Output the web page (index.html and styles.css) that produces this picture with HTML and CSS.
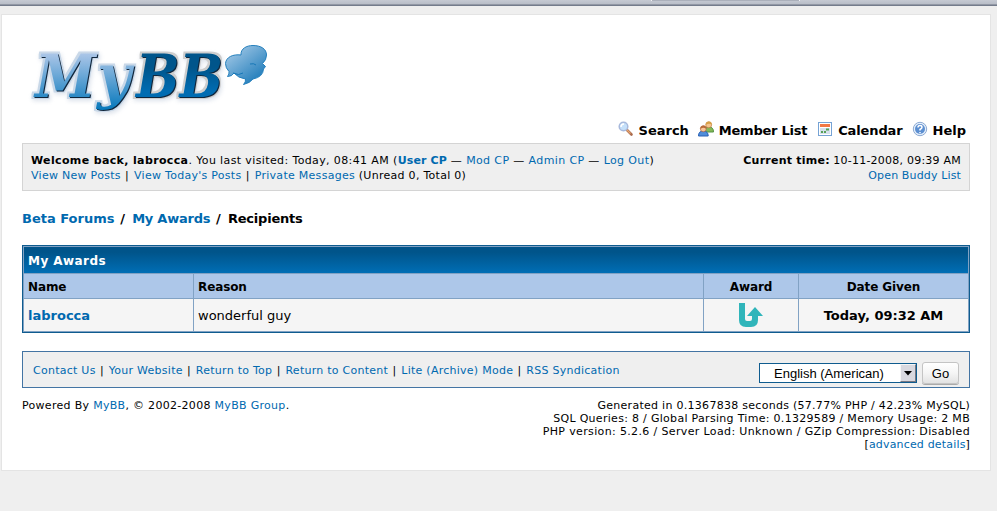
FILE: index.html
```html
<!DOCTYPE html>
<html lang="en">
<head>
<meta charset="utf-8">
<title>My Awards</title>
<link rel="stylesheet" href="styles.css">
</head>
<body>
<div class="chrome"><span></span></div>
<main class="container">
  <svg class="logo" width="260" height="90" viewBox="20 30 260 90">
    <defs>
      <linearGradient id="light" gradientUnits="userSpaceOnUse" x1="0" y1="52" x2="0" y2="109"><stop stop-color="#b0c8e9"/><stop offset="1" stop-color="#0879bc"/></linearGradient>
      <linearGradient id="dark" gradientUnits="userSpaceOnUse" x1="0" y1="54" x2="0" y2="98"><stop stop-color="#00558b"/><stop offset=".3" stop-color="#00558b"/><stop offset=".85" stop-color="#006cb2"/></linearGradient>
      <linearGradient id="bubble" x1="0" y1="0" x2=".8" y2="1"><stop stop-color="#b3d2ec"/><stop offset="1" stop-color="#1777b7"/></linearGradient>
      <filter id="halo-blue" x="-10%" y="-20%" width="120%" height="150%" color-interpolation-filters="sRGB">
        <feMorphology in="SourceAlpha" operator="dilate" radius="2" result="fat"/><feGaussianBlur in="fat" stdDeviation=".5" result="soft"/>
        <feFlood flood-color="#c9d8e8"/><feComposite in2="soft" operator="in" result="rim"/>
        <feOffset in="fat" dx="1" dy="2"/><feGaussianBlur stdDeviation="2" result="far"/><feFlood flood-color="#a9b8d0" flood-opacity=".4"/><feComposite in2="far" operator="in" result="glow"/>
        <feOffset in="SourceAlpha" dx="1" dy="1"/><feGaussianBlur stdDeviation=".7" result="near"/><feFlood flood-color="#10263c"/><feComposite in2="near" operator="in" result="edge"/>
        <feMerge><feMergeNode in="glow"/><feMergeNode in="rim"/><feMergeNode in="edge"/><feMergeNode in="SourceGraphic"/></feMerge>
      </filter>
      <filter id="halo-grey" x="-10%" y="-20%" width="120%" height="150%" color-interpolation-filters="sRGB">
        <feMorphology in="SourceAlpha" operator="dilate" radius="2" result="fat"/><feGaussianBlur in="fat" stdDeviation=".5" result="soft"/>
        <feFlood flood-color="#cecece"/><feComposite in2="soft" operator="in" result="rim"/>
        <feOffset in="fat" dx="1" dy="2"/><feGaussianBlur stdDeviation="2" result="far"/><feFlood flood-color="#a9b8d0" flood-opacity=".4"/><feComposite in2="far" operator="in" result="glow"/>
        <feOffset in="SourceAlpha" dx="1" dy="1"/><feGaussianBlur stdDeviation=".7" result="near"/><feFlood flood-color="#10263c"/><feComposite in2="near" operator="in" result="edge"/>
        <feMerge><feMergeNode in="glow"/><feMergeNode in="rim"/><feMergeNode in="edge"/><feMergeNode in="SourceGraphic"/></feMerge>
      </filter>
    </defs>
    <g filter="url(#halo-blue)" fill="url(#light)">
      <text x="35" y="97" textLength="61" lengthAdjust="spacingAndGlyphs">M</text><text x="97" y="97" textLength="34" lengthAdjust="spacingAndGlyphs">y</text>
    </g>
    <text x="136" y="97" textLength="87" lengthAdjust="spacingAndGlyphs" fill="url(#dark)" filter="url(#halo-grey)">BB</text>
    <path d="M241 54C241 49 246 45.500 253 45.500C261 45.500 266.500 49 266.500 55Q266.500 60 262.500 63.500L265.500 66.500L263.500 69Q263 77 253 79Q250 83 243.500 84.500Q246 82 245.500 79Q238 78 234 73Q232 76.500 227.500 76.500Q229.500 74 229 71.500Q225.500 68 225.500 63.500C226 57 233 54 241 55Z" fill="url(#bubble)" stroke="#2580bd"/>
    <path d="M250 64Q254 63 256 65M233 73Q239 76 243 73" fill="none" stroke="#1777b7"/>
  </svg>
  <nav class="menu">
    <a class="m1"><svg width="16" height="16" viewBox="0 0 16 16"><path d="M9 9l4.500 4.500" stroke="#a96a4d" stroke-width="2.600" stroke-linecap="round"/><path d="M8.500 8.500l4 4" stroke="#e7a56f" stroke-width="1.200"/><circle cx="5.500" cy="5.500" r="4.300" fill="#c5e0fa" stroke="#a8b9dc" stroke-width="1.500"/><path d="M3 6Q3 3 6 3" stroke="#fff" fill="none" stroke-width="1.500"/></svg><b>Search</b></a>
    <a class="m2"><svg width="16" height="16" viewBox="0 0 16 16"><path d="M6.500 11Q6.500 6 11 6Q15.500 6 15.500 11Z" fill="#84b957" stroke="#549344"/><circle cx="10.700" cy="3.800" r="3" fill="#f5c58f" stroke="#ba7434" stroke-width=".6"/><path d="M7.700 4Q8 .5 11 .5Q14 .7 13.700 4Q12 2 9.500 3Z" fill="#d7a045"/><path d="M.5 15Q.5 10 5.200 10Q10.200 10 10.200 15Z" fill="#508dda" stroke="#2861b5"/><circle cx="5.300" cy="7.800" r="3" fill="#f7c496" stroke="#9d583b" stroke-width=".6"/><path d="M2.300 8Q2.500 4.500 5.500 4.500Q8.500 4.700 8.300 8Q6 6.200 4 7Z" fill="#b96b38"/></svg><b>Member List</b></a>
    <a class="m3"><svg width="16" height="16" viewBox="0 0 16 16"><rect x="1.500" y="1.500" width="13" height="13" fill="#fff" stroke="#76a3d5"/><path d="M3 3h10v3H3z" fill="#f27844"/><path d="M3 7h10v6H3z" fill="#d5e0ec"/><path d="M4 10h2v2H4zm3 0h2v2H7zM9 7.500h3v2H9z" fill="#55a057"/></svg><b>Calendar</b></a>
    <a class="m4"><svg width="16" height="16" viewBox="0 0 16 16"><circle cx="8" cy="8" r="6.700" fill="#e7f0fb" stroke="#8ba9d3"/><circle cx="8" cy="8" r="5" fill="#5c8fd1"/><path d="M6 6.500Q6 4.500 8 4.500Q10 4.500 10 6.200Q10 7.300 8 8.500V9.500M8 11v1.200" fill="none" stroke="#fff" stroke-width="1.500"/></svg><b>Help</b></a>
  </nav>
  <section class="panel">
    <div><p><b class="w1">Welcome back, labrocca</b><span class="w2">. You last visited: Today, 08:41 AM (<a><b class="ucp">User CP</b></a> — <a>Mod CP</a> — <a>Admin CP</a> — <a>Log Out</a>)</span></p>
    <p class="w3"><a>View New Posts</a><i class="sep"> | </i><a>View Today's Posts</a><i class="sep"> | </i><a>Private Messages</a> (Unread 0, Total 0)</p></div>
    <div class="right"><p><b class="ct">Current time:</b> <span class="cd">10-11-2008, 09:39 AM</span></p><p><a class="obl">Open Buddy List</a></p></div>
  </section>
  <div class="crumbs"><a>Beta Forums</a><i> / </i><a class="tight">My Awards</a><i> / </i><span>Recipients</span></div>
  <section class="awards">
    <div class="title"><span>My Awards</span></div>
    <div class="c head"><span class="h1">Name</span></div><div class="c head"><span class="h2">Reason</span></div><div class="c head mid"><span class="h3">Award</span></div><div class="c head mid"><span class="h4">Date Given</span></div>
    <div class="c row"><a class="user">labrocca</a></div><div class="c row"><span class="reason">wonderful guy</span></div><div class="c row mid"><svg width="24" height="24" viewBox="0 0 24 24"><path d="M0 0H6V16Q6 18 8 18H11Q13 18 13 16V13H8L16 4L24 13H19V17Q19 24 12 24H7Q0 24 0 17Z" fill="#30b5ba"/></svg></div><div class="c row mid"><span class="date">Today, 09:32 AM</span></div>
  </section>
  <section class="foot">
    <div class="links"><a>Contact Us</a><i class="sep"> | </i><a>Your Website</a><i class="sep"> | </i><a>Return to Top</a><i class="sep"> | </i><a>Return to Content</a><i class="sep"> | </i><a>Lite (Archive) Mode</a><i class="sep"> | </i><a>RSS Syndication</a></div>
    <div class="select"><span>English (American)</span><i><svg width="8" height="5" viewBox="0 0 8 5"><path d="M0 0H8L4 4.500Z"/></svg></i></div>
    <button>Go</button>
  </section>
  <footer>
    <div><span class="pow">Powered By <a>MyBB</a>, © 2002-2008 <a>MyBB Group</a>.</span></div>
    <div class="right"><p><span class="f1">Generated in 0.1367838 seconds (57.77% PHP / 42.23% MySQL)</span></p><p><span class="f2">SQL Queries: 8 / Global Parsing Time: 0.1329589 / Memory Usage: 2 MB</span></p><p><span class="f3">PHP version: 5.2.6 / Server Load: Unknown / GZip Compression: Disabled</span></p><p><span class="f4">[<a>advanced details</a>]</span></p></div>
  </footer>
</main>
</body>
</html>
```
FILE: styles.css
```css
* { box-sizing: border-box; }
body { margin: 0; height: 511px; overflow: hidden; background: #efefef; color: #000; font: 11px/15px "DejaVu Sans", Verdana, sans-serif; white-space: nowrap; }
p { margin: 0; }
a { color: #0069af; }
i { font-style: normal; }
.chrome { height: 6px; background: linear-gradient(#c6cad3, #b9bec8 4px, #9298a5 4px, #9298a5 5px, #747c8c 5px); }
.chrome span { display: block; margin-left: 652px; width: 147px; height: 1px; background: #abb0bb; box-shadow: -1px 0 #f2f2f5, 1px 0 #f2f2f5; }
.container { margin: 8px 0 0 1px; width: 990px; height: 457px; padding: 0 20px; background: #fff; border: 1px solid #e4e4e4; }
.logo { display: block; margin: 15px 0 0 -2px; }
.logo text { font: italic bold 59px "DejaVu Serif", serif; }
.menu { display: flex; height: 23px; margin-right: 4px; justify-content: flex-end; font-size: 13px; }
.menu a { display: flex; color: #000; margin-left: 9px; line-height: 22px; }
.menu svg { margin: 1px 5px 0 0; }
.menu .m3 { margin-left: 10px; }
.m2 b { letter-spacing: -.25px; }
.m3 b { letter-spacing: -.12px; }
.panel { display: flex; justify-content: space-between; width: 948px; height: 48px; padding: 9px 8px; background: #efefef; border: 1px solid #d4d4d4; }
.w1 { letter-spacing: .36px; }
.w2 { letter-spacing: .38px; }
.ucp { letter-spacing: .14px; }
.w3 { letter-spacing: .28px; }
.sep { letter-spacing: .85px; }
.ct, .cd { letter-spacing: .23px; }
.obl { letter-spacing: .14px; }
.right { text-align: right; }
.crumbs { height: 54px; padding-top: 19px; line-height: 18px; font-size: 13px; font-weight: bold; }
.crumbs i { letter-spacing: 1.3px; }
.crumbs .tight { letter-spacing: -.25px; }
.crumbs span { letter-spacing: -.2px; }
.awards { display: grid; grid-template: 26px 24px 32px / 169px 509px 94px 169px; gap: 1px; width: 948px; height: 88px; padding: 1px; background: #81a2c4; border: 1px solid #0f5c8f; }
.title { grid-column: 1 / -1; padding-left: 4px; background: linear-gradient(#00548a 20%, #006eb5); color: #fff; font-size: 12px; font-weight: bold; line-height: 28px; letter-spacing: .45px; }
.c { display: flex; align-items: center; padding: 0 4px; }
.mid { justify-content: center; }
.head { padding-top: 2px; background: #adc7e9; font-weight: bold; font-size: 12px; letter-spacing: -.1px; }
.row { background: #f5f5f5; font-size: 13px; }
.user, .date { font-weight: bold; }
.foot { display: flex; width: 948px; height: 37px; margin-top: 18px; padding: 10px; background: #efefef; border: 1px solid #4374a3; }
.links { width: 726px; line-height: 17px; letter-spacing: .26px; }
.links .sep { letter-spacing: .8px; }
.select { display: flex; width: 158px; height: 20px; margin-top: 1px; background: #fff; border: 1px solid #0f5c8f; color: #000; font: 13px/19px "Liberation Sans", sans-serif; }
.select span { width: 140px; padding-left: 14px; }
.select i { display: flex; align-items: center; justify-content: center; width: 16px; height: 18px; background: #d8d8df; border: 1px solid #f6f6f6; border-right-color: #777782; border-bottom-color: #777782; }
.foot button { width: 37px; height: 22px; margin-left: 5px; padding: 0; border: 1px solid #c4c4c4; border-radius: 3px; background: linear-gradient(#fff, #f5f5f5 50%, #e2e2e2); box-shadow: 0 1px #aaa; font: 13px "Liberation Sans", sans-serif; }
footer { display: flex; justify-content: space-between; width: 948px; margin-top: 11px; line-height: 13px; }
.pow, .f2 { letter-spacing: .3px; }
.f1 { letter-spacing: .28px; }
.f3 { letter-spacing: .36px; }
.f4 { letter-spacing: .17px; }
```
